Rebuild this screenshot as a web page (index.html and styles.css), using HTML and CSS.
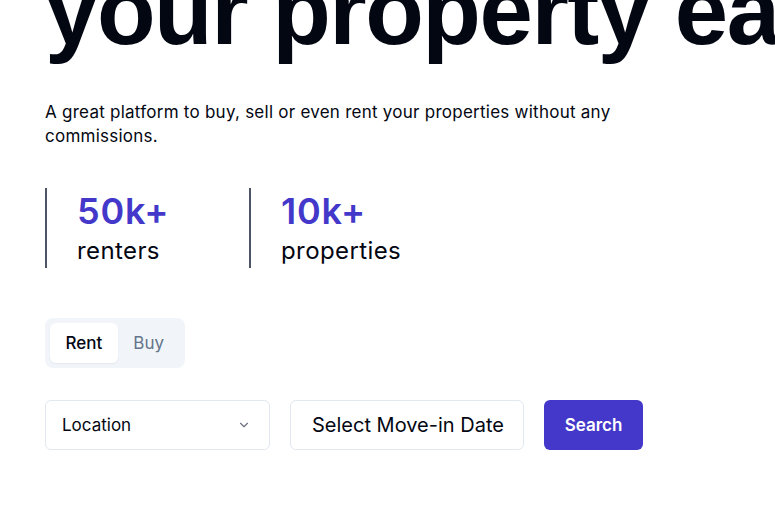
FILE: index.html
```html
<!DOCTYPE html>
<html lang="en">
<head>
<meta charset="utf-8">
<title>Property</title>
<link rel="stylesheet" href="styles.css">
</head>
<body>
<main class="hero">
  <h1 class="title">your property easily</h1>
  <p class="lead">A great platform to buy, sell or even rent your properties without any commissions.</p>
  <div class="stats">
    <div class="stat stat-first">
      <div class="stat-num">50k+</div>
      <div class="stat-label">renters</div>
    </div>
    <div class="stat">
      <div class="stat-num">10k+</div>
      <div class="stat-label">properties</div>
    </div>
  </div>
  <div class="toggle">
    <button class="tab tab-active">Rent</button>
    <button class="tab">Buy</button>
  </div>
  <form class="search">
    <div class="field select">
      <span>Location</span>
      <svg class="chev" width="14" height="14" viewBox="0 0 24 24" fill="none" stroke="currentColor" stroke-width="2" stroke-linecap="round" stroke-linejoin="round"><path d="M6 9l6 6 6-6"/></svg>
    </div>
    <div class="field date">Select Move-in Date</div>
    <button type="button" class="btn">Search</button>
  </form>
</main>
</body>
</html>
```
FILE: styles.css
```css
html, body {
  margin: 0;
  padding: 0;
  background: #ffffff;
  overflow: hidden;
}
body {
  font-family: Inter, "Noto Sans", sans-serif;
  color: #0f172a;
}
.hero {
  padding-left: 45px;
  width: 730px;
}
.title {
  margin: -37px 0 0 0;
  font-family: "Liberation Sans", Arial, sans-serif;
  font-weight: 700;
  font-size: 96px;
  line-height: 96px;
  letter-spacing: -1.5px;
  color: #030712;
  white-space: nowrap;
}
.lead {
  margin: 41px 0 0 0;
  width: 590px;
  font-size: 17px;
  letter-spacing: 0.25px;
  line-height: 24px;
  color: #030712;
}
.stats {
  display: flex;
  margin-top: 40px;
}
.stat {
  border-left: 2px solid #4b5563;
  padding: 3px 0 1px 30px;
}
.stat-first {
  width: 172px;
}
.stat-num {
  font-size: 36px;
  line-height: 40px;
  font-weight: 600;
  letter-spacing: 0.8px;
  color: #4338ca;
}
.stat-label {
  margin-top: 4px;
  font-size: 24px;
  line-height: 32px;
  letter-spacing: 0.4px;
  color: #030712;
}
.toggle {
  display: inline-flex;
  margin-top: 50px;
  padding: 5px;
  background: #f1f5f9;
  border-radius: 8px;
}
.tab {
  font-family: Inter, sans-serif;
  font-size: 17px;
  line-height: 24px;
  padding: 8px 15.5px;
  border: 0;
  background: transparent;
  color: #64748b;
  border-radius: 6px;
}
.tab-active {
  background: #ffffff;
  color: #030712;
  font-weight: 500;
  box-shadow: 0 1px 2px rgba(0,0,0,0.05);
}
.search {
  display: flex;
  gap: 20px;
  margin-top: 32px;
  align-items: center;
}
.field {
  box-sizing: border-box;
  height: 50px;
  border: 1px solid #e2e8f0;
  border-radius: 6px;
  display: flex;
  align-items: center;
  color: #030712;
  white-space: nowrap;
}
.select {
  width: 225px;
  padding: 0 18px 0 16px;
  justify-content: space-between;
  font-size: 17px;
}
.chev {
  color: #6b7280;
}
.date {
  width: 234px;
  padding: 0 16px 0 21px;
  font-size: 20px;
}
.btn {
  height: 50px;
  width: 99px;
  border: 0;
  border-radius: 6px;
  background: #4338ca;
  color: #ffffff;
  font-family: Inter, sans-serif;
  font-weight: 600;
  font-size: 17px;
}
```
